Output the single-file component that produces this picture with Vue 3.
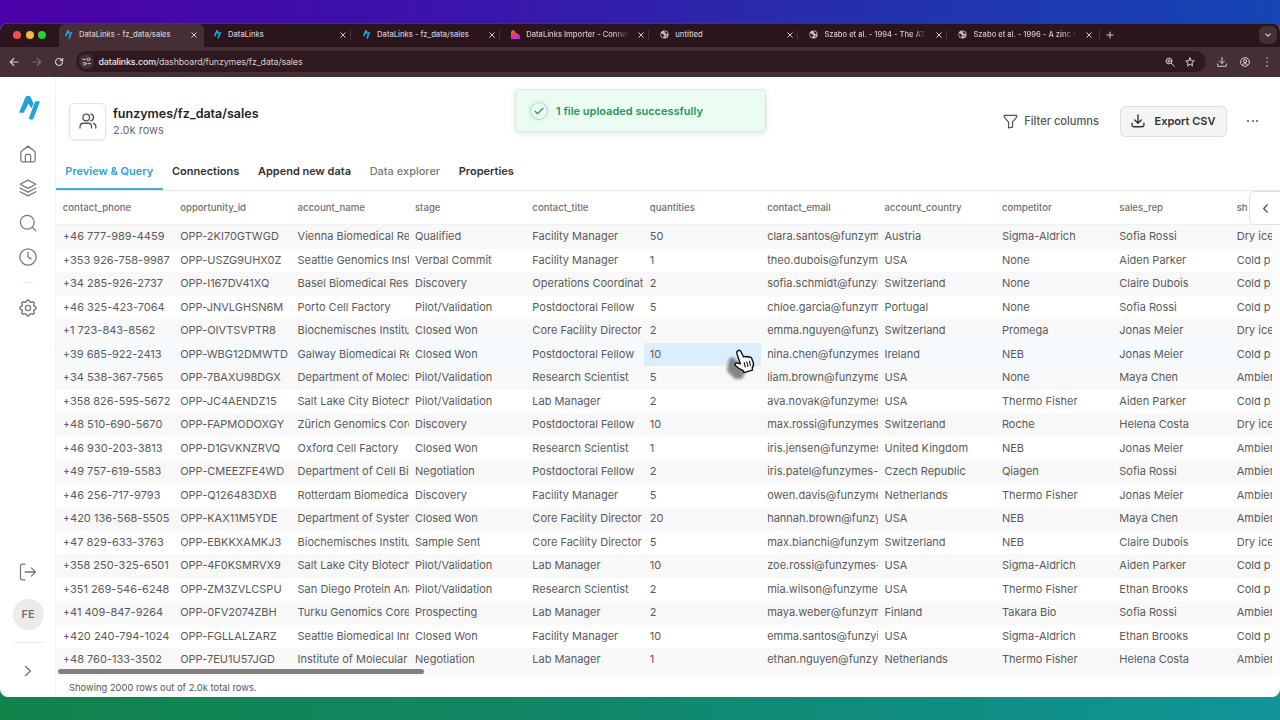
<template>
  <div class="desktop">
    <div class="browser">
      <!-- tab strip -->
      <div class="tab-strip">
        <div class="lights">
          <i class="light red"></i><i class="light yellow"></i><i class="light green"></i>
        </div>
        <div v-for="(tab, i) in tabs" :key="i" class="tab" :class="{ active: i === 0, divided: i > 1 }">
          <svg v-if="tab.icon === 'logo'" class="favicon" viewBox="0 0 22 26">
            <path class="logo-path" :d="logoPath" />
          </svg>
          <svg v-else-if="tab.icon === 'flame'" class="favicon" viewBox="0 0 10 10">
            <defs>
              <linearGradient id="flame" x1="0" y1="0" x2="0.3" y2="1">
                <stop offset="0" stop-color="#ff6a1f" />
                <stop offset="0.55" stop-color="#f8336a" />
                <stop offset="1" stop-color="#a63be8" />
              </linearGradient>
            </defs>
            <path d="M0 3Q0 .4 2.5.4 4.6.4 5 3L7.5 3.8Q10 4.8 10 8V10H0Z" fill="url(#flame)" />
          </svg>
          <svg v-else class="favicon" viewBox="0 0 10 10">
            <circle cx="5" cy="5" r="4.5" fill="#c9c1c3" />
            <path d="M1.2 4Q3 3.6 3.6 5 5.2 5 5 6.2L3.7 7.2V8.9Q.8 7.8 1.2 4ZM5.2 1.2Q4.6 2.8 6 3.2 6.3 4.4 8.6 4.8 8.6 2 5.2 1.2ZM6.1 6.4 8.1 6.2 6.6 8.3Z" fill="#33191f" />
          </svg>
          <span class="tab-title" :class="{ faded: tab.faded }">{{ tab.title }}</span>
          <svg class="tab-close" viewBox="0 0 8 8"><path d="M1.7 1.7 6.3 6.3M6.3 1.7 1.7 6.3" /></svg>
        </div>
        <div class="new-tab">
          <svg viewBox="0 0 8 8"><path d="M4 1V7M1 4H7" /></svg>
        </div>
        <div class="tab-search">
          <svg viewBox="0 0 8 8"><path d="M1.8 3 4 5.1 6.2 3" /></svg>
        </div>
      </div>

      <!-- address bar -->
      <div class="toolbar">
        <svg class="nav-icon" viewBox="0 0 10 10"><path d="M9 5H1.5M4.8 1.5 1.3 5 4.8 8.5" /></svg>
        <svg class="nav-icon dim" viewBox="0 0 10 10"><path d="M1 5H8.5M5.2 1.5 8.7 5 5.2 8.5" /></svg>
        <svg class="nav-icon" viewBox="0 0 10 10"><path d="M8.5 5A3.5 3.5 0 1 1 7.4 2.4L8.6 3.6M8.7 1.2V3.8H6.1" /></svg>
        <div class="address">
          <span class="site-info">
            <svg viewBox="0 0 10 10"><path d="M.8 2.6H4M6.6 7.4H9.5" /><circle cx="7.2" cy="2.6" r="1.5" /><circle cx="3" cy="7.4" r="1.5" /></svg>
          </span>
          <span class="url"><b>datalinks.com</b>/dashboard/funzymes/fz_data/sales</span>
          <svg class="bar-icon" viewBox="0 0 10 10"><circle cx="4" cy="4" r="2.9" /><path d="M6.2 6.2 9.3 9.3M2.6 4H5.4M4 2.6V5.4" /></svg>
          <svg class="bar-icon" viewBox="0 0 10 10"><path d="M5 .9 6.2 3.7 9.2 3.9 6.9 5.9 7.6 8.9 5 7.3 2.4 8.9 3.1 5.9.8 3.9 3.8 3.7Z" /></svg>
        </div>
        <svg class="bar-icon download" viewBox="0 0 10 10"><path d="M5 .5V6.2M2.5 4 5 6.5 7.5 4M.7 7V9.3H9.3V7" /></svg>
        <svg class="bar-icon profile" viewBox="0 0 10 10"><circle cx="5" cy="5" r="4.4" /><circle cx="5" cy="4.1" r="1.6" /><path d="M2.4 8.2Q2.8 6.6 5 6.6T7.6 8.2" /></svg>
        <svg class="bar-icon menu" viewBox="0 0 10 10"><path class="dots" d="M5 1.2V1.3M5 5V5.1M5 8.8V8.9" /></svg>
      </div>

      <div class="app">
        <!-- sidebar -->
        <aside class="sidebar">
          <svg class="brand" viewBox="0 0 22 26">
            <path class="logo-path" :d="logoPath" />
          </svg>
          <nav class="side-nav">
            <svg class="icon" viewBox="0 0 24 24"><path d="M2.5 9 12 1.500 21.500 9V20.500A2 2 0 0 1 19.500 22.500H4.500A2 2 0 0 1 2.500 20.500ZM8.500 22.500V14.500Q8.500 12.500 10.500 12.500H13.500Q15.500 12.500 15.500 14.500V22.500" /></svg>
            <svg class="icon" viewBox="0 0 24 24"><path d="M12 1.500 22.500 7 12 12.500 1.500 7ZM1.500 12 12 17.500 22.500 12M1.500 17 12 22.500 22.500 17" /></svg>
            <svg class="icon" viewBox="0 0 24 24"><circle cx="11" cy="11" r="9.200" /><path d="M17.800 17.800 22.500 22.500" /></svg>
            <svg class="icon" viewBox="0 0 24 24"><circle cx="12" cy="12" r="10.800" /><path d="M12 5.500V12L16 14.500" /></svg>
          </nav>
          <span class="short-line"></span>
          <svg class="icon" viewBox="0 0 24 24">
            <path d="M10.330 4.320c.430-1.760 2.920-1.760 3.350 0a1.720 1.720 0 0 0 2.570 1.070c1.540-.940 3.310.820 2.370 2.370a1.720 1.720 0 0 0 1.060 2.570c1.760.430 1.760 2.920 0 3.350a1.720 1.720 0 0 0-1.060 2.570c.940 1.540-.830 3.310-2.370 2.370a1.720 1.720 0 0 0-2.570 1.060c-.430 1.760-2.920 1.760-3.350 0a1.720 1.720 0 0 0-2.570-1.060c-1.540.940-3.310-.830-2.370-2.370a1.720 1.720 0 0 0-1.070-2.570c-1.760-.430-1.760-2.920 0-3.350a1.720 1.720 0 0 0 1.070-2.570c-.940-1.540.820-3.310 2.370-2.370 1 .600 2.300.070 2.570-1.070Z" transform="translate(-2.400 -2.400) scale(1.200)" />
            <circle cx="12" cy="12" r="3.500" />
          </svg>
          <div class="side-bottom">
            <svg class="icon" viewBox="0 0 24 24"><path d="M8 1.500H4.500A2.500 2.500 0 0 0 2 4V20A2.500 2.500 0 0 0 4.500 22.500H8M8 12H22M16.500 6.500 22 12 16.500 17.500" /></svg>
            <span class="avatar">FE</span>
            <span class="long-line"></span>
            <svg class="expand" viewBox="0 0 10 12"><path d="M2.500 1.500 7.500 6 2.500 10.500" /></svg>
          </div>
        </aside>

        <main class="main">
          <header class="header">
            <span class="dataset-icon">
              <svg viewBox="0 0 20 18"><circle cx="8" cy="5" r="3.700" /><path d="M1 17V15.500Q1 11.500 5 11.500H10.500Q14 11.500 14 15.500V17M13.300 1.300A3.800 3.800 0 0 1 13.300 8.700M16 11.700Q18.800 12.300 18.800 15.500V17" /></svg>
            </span>
            <div class="dataset">
              <h1>funzymes/fz_data/sales</h1>
              <p>2.0k rows</p>
            </div>
            <button class="filter">
              <svg viewBox="0 0 16 16"><path d="M1.300 1.500H14.700V2.600Q14.700 3.300 14.200 3.900L10.200 8.500V14L5.900 14.700V8.700L1.800 3.900Q1.300 3.300 1.300 2.600Z" /></svg>
              Filter columns
            </button>
            <button class="export">
              <svg viewBox="0 0 16 16"><path d="M8 1V10.300M4.300 6.900 8 10.500 11.700 6.900M1.200 10.500V12.500Q1.200 14.500 3.200 14.500H12.800Q14.800 14.500 14.800 12.500V10.500" /></svg>
              Export CSV
            </button>
            <span class="more"><i></i><i></i><i></i></span>
          </header>

          <div class="page-tabs">
            <span v-for="(name, i) in pageTabs" :key="name" class="page-tab" :class="{ current: i === 0, muted: i === 3 }">{{ name }}</span>
          </div>

          <div class="table-area">
            <div class="table-scroll">
              <div class="row head">
                <div v-for="col in columns" :key="col" class="cell">{{ col }}</div>
              </div>
              <div v-for="(row, r) in rows" :key="r" class="row body" :class="{ hovered: r === 5 }">
                <div v-for="(value, c) in row" :key="c" class="cell" :class="{ picked: r === 5 && c === 5 }">{{ value }}</div>
              </div>
            </div>
            <span class="scrollbar"></span>
            <span class="collapse">
              <svg viewBox="0 0 10 12"><path d="M7 1.800 3 6 7 10.200" /></svg>
            </span>
          </div>
          <footer class="footer">Showing 2000 rows out of 2.0k total rows.</footer>
        </main>
      </div>
    </div>

    <div class="toast">
      <span class="toast-icon"><svg viewBox="0 0 10 8"><path d="M1 4.300 3.500 6.700 9 1.300" /></svg></span>
      1 file uploaded successfully
    </div>

    <!-- pointer with its drop shadow -->
    <svg class="cursor" viewBox="0 0 36 36">
      <path class="cursor-shadow" d="M4 14 8 12 14 18 20 20 20 28 17 34 10 34 2 26Z" />
      <path class="cursor-hand" d="M13 5.600Q14.600 4.600 15.700 6.300L18.600 12Q19.600 10.700 21.200 12.100 22.500 10.900 23.900 12.400 25.700 11.300 26.700 13.400L28.200 17.500Q29.200 21 27.200 22.800L27.500 25.200 19 27.600 18 25.400Q14 24 10.400 20.400 9.600 18.200 11.500 17.900L15.400 18.900 12 9Q11.300 6.400 13 5.600Z" />
      <path class="cursor-lines" d="M19.200 17.500 20.300 22M21.900 17 22.900 21.500M24.500 16.200 25.500 20.700" />
    </svg>
  </div>
</template>

<script setup>
const logoPath = 'M0 18 6.500 2.200Q7.400.2 9.600.2 11.700.2 12.500 2L15.200 8.500 13.200 13.500 9.800 8.500 5 18ZM17 6H22L15.600 23Q14.700 25.300 12.600 25.300L10.200 24Z'

const tabs = [
  { icon: 'logo', title: 'DataLinks - fz_data/sales' },
  { icon: 'logo', title: 'DataLinks' },
  { icon: 'logo', title: 'DataLinks - fz_data/sales' },
  { icon: 'flame', title: 'DataLinks Importer - Connect', faded: true },
  { icon: 'globe', title: 'untitled' },
  { icon: 'globe', title: 'Szabo et al. - 1994 - The ATP', faded: true },
  { icon: 'globe', title: 'Szabo et al. - 1996 - A zinc fi', faded: true },
]

const pageTabs = ['Preview & Query', 'Connections', 'Append new data', 'Data explorer', 'Properties']

const columns = ['contact_phone', 'opportunity_id', 'account_name', 'stage', 'contact_title', 'quantities', 'contact_email', 'account_country', 'competitor', 'sales_rep', 'sh']

const rows = [
  ['+46 777-989-4459', 'OPP-2KI70GTWGD', 'Vienna Biomedical Re', 'Qualified', 'Facility Manager', 50, 'clara.santos@funzym', 'Austria', 'Sigma-Aldrich', 'Sofia Rossi', 'Dry ice'],
  ['+353 926-758-9987', 'OPP-USZG9UHX0Z', 'Seattle Genomics Inst', 'Verbal Commit', 'Facility Manager', 1, 'theo.dubois@funzym', 'USA', 'None', 'Aiden Parker', 'Cold p'],
  ['+34 285-926-2737', 'OPP-I167DV41XQ', 'Basel Biomedical Rese', 'Discovery', 'Operations Coordinat', 2, 'sofia.schmidt@funzyi', 'Switzerland', 'None', 'Claire Dubois', 'Cold p'],
  ['+46 325-423-7064', 'OPP-JNVLGHSN6M', 'Porto Cell Factory', 'Pilot/Validation', 'Postdoctoral Fellow', 5, 'chloe.garcia@funzym', 'Portugal', 'None', 'Sofia Rossi', 'Cold p'],
  ['+1 723-843-8562', 'OPP-OIVTSVPTR8', 'Biochemisches Institu', 'Closed Won', 'Core Facility Director', 2, 'emma.nguyen@funzy', 'Switzerland', 'Promega', 'Jonas Meier', 'Dry ice'],
  ['+39 685-922-2413', 'OPP-WBG12DMWTD', 'Galway Biomedical Re', 'Closed Won', 'Postdoctoral Fellow', 10, 'nina.chen@funzymes', 'Ireland', 'NEB', 'Jonas Meier', 'Cold p'],
  ['+34 538-367-7565', 'OPP-7BAXU98DGX', 'Department of Molecu', 'Pilot/Validation', 'Research Scientist', 5, 'liam.brown@funzyme', 'USA', 'None', 'Maya Chen', 'Ambien'],
  ['+358 826-595-5672', 'OPP-JC4AENDZ15', 'Salt Lake City Biotech', 'Pilot/Validation', 'Lab Manager', 2, 'ava.novak@funzymes', 'USA', 'Thermo Fisher', 'Aiden Parker', 'Cold p'],
  ['+48 510-690-5670', 'OPP-FAPMODOXGY', 'Zürich Genomics Core', 'Discovery', 'Postdoctoral Fellow', 10, 'max.rossi@funzymes', 'Switzerland', 'Roche', 'Helena Costa', 'Dry ice'],
  ['+46 930-203-3813', 'OPP-D1GVKNZRVQ', 'Oxford Cell Factory', 'Closed Won', 'Research Scientist', 1, 'iris.jensen@funzymes', 'United Kingdom', 'NEB', 'Jonas Meier', 'Ambien'],
  ['+49 757-619-5583', 'OPP-CMEEZFE4WD', 'Department of Cell Bi', 'Negotiation', 'Postdoctoral Fellow', 2, 'iris.patel@funzymes-', 'Czech Republic', 'Qiagen', 'Sofia Rossi', 'Ambien'],
  ['+46 256-717-9793', 'OPP-Q126483DXB', 'Rotterdam Biomedica', 'Discovery', 'Facility Manager', 5, 'owen.davis@funzyme', 'Netherlands', 'Thermo Fisher', 'Jonas Meier', 'Ambien'],
  ['+420 136-568-5505', 'OPP-KAX11M5YDE', 'Department of System', 'Closed Won', 'Core Facility Director', 20, 'hannah.brown@funzy', 'USA', 'NEB', 'Maya Chen', 'Ambien'],
  ['+47 829-633-3763', 'OPP-EBKKXAMKJ3', 'Biochemisches Institu', 'Sample Sent', 'Core Facility Director', 5, 'max.bianchi@funzym', 'Switzerland', 'NEB', 'Claire Dubois', 'Dry ice'],
  ['+358 250-325-6501', 'OPP-4F0KSMRVX9', 'Salt Lake City Biotech', 'Pilot/Validation', 'Lab Manager', 10, 'zoe.rossi@funzymes-', 'USA', 'Sigma-Aldrich', 'Aiden Parker', 'Cold p'],
  ['+351 269-546-6248', 'OPP-ZM3ZVLCSPU', 'San Diego Protein Ana', 'Pilot/Validation', 'Research Scientist', 2, 'mia.wilson@funzyme', 'USA', 'Thermo Fisher', 'Ethan Brooks', 'Cold p'],
  ['+41 409-847-9264', 'OPP-0FV2074ZBH', 'Turku Genomics Core', 'Prospecting', 'Lab Manager', 2, 'maya.weber@funzym', 'Finland', 'Takara Bio', 'Sofia Rossi', 'Ambien'],
  ['+420 240-794-1024', 'OPP-FGLLALZARZ', 'Seattle Biomedical Inn', 'Closed Won', 'Facility Manager', 10, 'emma.santos@funzyi', 'USA', 'Sigma-Aldrich', 'Ethan Brooks', 'Cold p'],
  ['+48 760-133-3502', 'OPP-7EU1U57JGD', 'Institute of Molecular', 'Negotiation', 'Lab Manager', 1, 'ethan.nguyen@funzy', 'Netherlands', 'Thermo Fisher', 'Helena Costa', 'Ambien'],
]
</script>

<style>
body {
  background: #3c18a8;
  overflow: hidden;
}
</style>

<style scoped>
.desktop {
  position: relative;
  width: 1280px;
  height: 720px;
  box-sizing: border-box;
  padding: 23px 0;
  background:
    linear-gradient(90deg, #4b00a8 0%, #3916ab 38%, #2430ae 68%, #1546b4 100%) top / 100% 360px no-repeat,
    linear-gradient(90deg, #12834b 0%, #108768 45%, #0f9499 100%) bottom / 100% 360px no-repeat;
  font-family: Inter, sans-serif;
  overflow: hidden;
}

svg {
  display: block;
  flex: none;
  fill: none;
  stroke: currentColor;
  stroke-linecap: round;
  stroke-linejoin: round;
}

.browser {
  height: 674px;
  display: flex;
  flex-direction: column;
  border-radius: 8px;
  overflow: hidden;
  background: #fff;
}

.tab-strip {
  height: 24px;
  flex: none;
  display: flex;
  align-items: center;
  background: #2a151c;
  color: #d4c8cc;
  box-sizing: border-box;
  border-top: 1px solid #4e3450;
}

.lights {
  width: 59px;
  box-sizing: border-box;
  padding-left: 13px;
  padding-bottom: 1px;
  display: flex;
  gap: 4.5px;
}

.light {
  width: 8px;
  height: 8px;
  border-radius: 50%;
}

.red { background: #f14e56; }
.yellow { background: #f4b73d; }
.green { background: #32c943; }

.tab {
  position: relative;
  width: 149.1px;
  height: 23px;
  flex: none;
  box-sizing: border-box;
  display: flex;
  align-items: center;
  padding: 0 10px 2px 5px;
  font-size: 7.6px;
  font-weight: 500;
}

.tab.active {
  width: 145px;
  margin-right: 4px;
  padding-right: 6px;
  background: #452e34;
  border-radius: 6px 6px 0 0;
}

/* separator between inactive tabs */
.tab.divided::before,
.new-tab::before {
  content: '';
  position: absolute;
  left: -7px;
  top: 6px;
  width: 1px;
  height: 10px;
  background: #483038;
}

.favicon {
  width: 9px;
  height: 9px;
  stroke: none;
}

.logo-path {
  fill: #20a3dc;
  stroke: none;
}

.tab-title {
  flex: 1;
  min-width: 0;
  margin-left: 6px;
  margin-right: 6px;
  overflow: hidden;
  white-space: nowrap;
}

.tab-title.faded {
  mask-image: linear-gradient(90deg, #000 84%, transparent 98%);
}

.tab-close {
  width: 8px;
  height: 8px;
  stroke-width: 1;
}

.new-tab {
  position: relative;
  height: 23px;
  box-sizing: border-box;
  padding-bottom: 2px;
  display: flex;
  align-items: center;
  margin-left: 3.5px;
}

.new-tab svg {
  width: 8px;
  height: 8px;
  stroke-width: 1;
}

.tab-search {
  width: 18px;
  height: 18px;
  margin: 0 3px 1px auto;
  border-radius: 6px;
  background: #452e34;
  display: flex;
  align-items: center;
  justify-content: center;
}

.tab-search svg {
  width: 8px;
  height: 8px;
  stroke-width: 1.2;
}

.toolbar {
  height: 30px;
  flex: none;
  box-sizing: border-box;
  display: flex;
  align-items: center;
  padding: 0 0 1px 9px;
  background: #452e34;
  color: #d8cbcf;
}

.nav-icon {
  width: 10px;
  height: 10px;
  margin-right: 12.5px;
  stroke-width: 1.1;
}

.nav-icon.dim {
  color: #7d686f;
}

.address {
  width: 1130px;
  height: 21px;
  box-sizing: border-box;
  margin-left: -1px;
  padding: 0 10.5px 0 3px;
  display: flex;
  align-items: center;
  border-radius: 11px;
  background: #2f1a20;
}

.site-info {
  width: 15px;
  height: 15px;
  border-radius: 50%;
  background: #452e34;
  display: flex;
  align-items: center;
  justify-content: center;
}

.site-info svg {
  width: 9px;
  height: 9px;
  stroke-width: 1.1;
}

.url {
  flex: 1;
  margin-left: 5px;
  font-size: 8.8px;
  letter-spacing: -0.1px;
}

.url b {
  font-weight: 500;
  color: #f2e9eb;
}

.bar-icon {
  width: 10px;
  height: 10px;
  stroke-width: 1;
}

.address .bar-icon + .bar-icon {
  margin-left: 10px;
}

.download { margin-left: 11px; }
.profile { margin-left: 13px; }
.menu { margin-left: 12px; }
.dots { stroke-width: 1.5; }

.app {
  flex: 1;
  min-height: 0;
  display: flex;
}

.sidebar {
  width: 56px;
  box-sizing: border-box;
  flex: none;
  display: flex;
  flex-direction: column;
  align-items: center;
  border-right: 1px solid #f0f0f0;
  padding-left: 1px;
  padding-top: 18px;
  color: #777;
}

.brand {
  width: 21px;
  height: 26px;
  margin-left: 3px;
}

.side-nav {
  display: flex;
  flex-direction: column;
  gap: 16.6px;
  margin-top: 23.5px;
}

.icon {
  width: 18px;
  height: 18px;
  stroke-width: 1.7;
}

.short-line {
  width: 10px;
  height: 1px;
  margin: 16px 0 15.5px;
  background: #ececec;
}

.side-bottom {
  margin-top: auto;
  display: flex;
  flex-direction: column;
  align-items: center;
}

.avatar {
  width: 31px;
  height: 31px;
  margin-top: 18px;
  border-radius: 50%;
  background: #ebebeb;
  color: #717171;
  font-size: 11px;
  font-weight: 600;
  line-height: 31px;
  text-align: center;
}

.long-line {
  width: 31px;
  height: 1px;
  margin: 12px 0 22px;
  background: #ececec;
}

.expand {
  width: 10px;
  height: 12px;
  margin-bottom: 20px;
  stroke-width: 1.5;
}

.main {
  flex: 1;
  min-width: 0;
  display: flex;
  flex-direction: column;
}

.header {
  height: 75px;
  flex: none;
  box-sizing: border-box;
  padding: 13px 22px 0 13px;
  display: flex;
  align-items: center;
}

.dataset-icon {
  width: 37px;
  height: 37px;
  box-sizing: border-box;
  border: 1px solid #e3e3e3;
  border-radius: 5px;
  box-shadow: 0 1px 2px rgba(0, 0, 0, 0.08);
  display: flex;
  align-items: center;
  justify-content: center;
  color: #555;
}

.dataset-icon svg {
  width: 18px;
  height: 16px;
  stroke-width: 1.5;
}

.dataset {
  flex: 1;
  margin-left: 7px;
  padding-top: 2px;
}

.dataset h1 {
  margin: 0;
  font-size: 12.5px;
  line-height: 17px;
  font-weight: 600;
  color: #222;
}

.dataset p {
  margin: 0;
  font-size: 11px;
  line-height: 17px;
  color: #6c6c6c;
}

button {
  font-family: inherit;
  font-size: 11.1px;
  font-weight: 500;
  display: flex;
  align-items: center;
  background: none;
  border: 0;
  padding: 0;
  color: #555;
}

.filter svg {
  width: 15px;
  height: 15px;
  margin-right: 6px;
  stroke-width: 1.3;
}

.export {
  width: 107px;
  height: 31px;
  box-sizing: border-box;
  margin-left: 21px;
  padding-left: 9.5px;
  border: 1px solid #dedede;
  border-radius: 5px;
  background: #f5f5f5;
  color: #333;
  font-weight: 600;
  font-size: 11px;
}

.export svg {
  width: 14px;
  height: 14px;
  margin-right: 10px;
  stroke-width: 1.6;
}

.more {
  display: flex;
  gap: 2.5px;
  margin-left: 20px;
}

.more i {
  width: 2px;
  height: 2px;
  border-radius: 50%;
  background: #555;
}

.page-tabs {
  height: 39px;
  flex: none;
  box-sizing: border-box;
  border-bottom: 1px solid #e8e8e8;
  display: flex;
  font-size: 11px;
  font-weight: 600;
  color: #333;
}

.page-tab {
  height: 38px;
  box-sizing: border-box;
  padding: 0 9.3px;
  line-height: 38px;
  white-space: nowrap;
}

.page-tab.current {
  color: #2ba3d4;
  border-bottom: 2px solid #45addb;
}

.page-tab.muted {
  color: #777;
  font-weight: 500;
}

.table-area {
  position: relative;
  height: 485px;
  flex: none;
  background: #fbfbfb;
}

.table-scroll {
  width: 1216px;
  height: 485px;
  overflow: hidden;
  background: #f8f8f8;
}

.row {
  display: flex;
  width: 1293px;
  box-sizing: border-box;
  padding-left: 0.7px;
  background: #fff;
}

.head {
  height: 34px;
  border-bottom: 1px solid #f0f0f0;
  color: #707070;
  font-size: 9.6px;
  font-weight: 500;
}

.head .cell {
  line-height: 34px;
}

.body {
  height: 23.5px;
  color: #5a5a5a;
  font-size: 11px;
}

.body:nth-child(even) {
  background: #f8f8f8;
}

.body.hovered {
  background: #f4fafe;
}

.cell {
  width: 117.4px;
  flex: none;
  box-sizing: border-box;
  padding-left: 6.1px;
  line-height: 23.5px;
  white-space: nowrap;
  overflow: hidden;
}

.picked {
  background: #daeffb;
}

.scrollbar {
  position: absolute;
  left: 2px;
  bottom: 2px;
  width: 366px;
  height: 5px;
  border-radius: 3px;
  background: #808080;
}

.collapse {
  position: absolute;
  right: -1px;
  top: 0;
  width: 32px;
  height: 34px;
  box-sizing: border-box;
  border: 1px solid #e0e0e0;
  border-radius: 5px 0 0 5px;
  background: #fff;
  color: #555;
  display: flex;
  align-items: center;
  justify-content: center;
}

.collapse svg {
  width: 9px;
  height: 11px;
  stroke-width: 1.4;
}

.footer {
  flex: 1;
  padding-left: 13px;
  font-size: 9.4px;
  line-height: 24px;
  color: #555;
}

.toast {
  position: absolute;
  left: 515px;
  top: 89px;
  width: 251px;
  height: 43px;
  box-sizing: border-box;
  padding-left: 12px;
  display: flex;
  align-items: center;
  border: 1px solid #c2f3d5;
  border-radius: 4px;
  background: #ebfdf3;
  box-shadow: 0 2px 6px rgba(0, 0, 0, 0.1);
  color: #26975a;
  font-size: 11px;
  font-weight: 600;
}

.toast-icon {
  width: 18px;
  height: 18px;
  box-sizing: border-box;
  margin: 0 8px 0 2px;
  border: 1px solid #a6d8ba;
  border-radius: 50%;
  box-shadow: 0 0 0 1.5px #ebfdf3, 0 0 0 2.5px #d9f5e5;
  display: flex;
  align-items: center;
  justify-content: center;
}

.toast-icon svg {
  width: 10px;
  height: 8px;
  stroke-width: 1.2;
}

.cursor {
  position: absolute;
  left: 725px;
  top: 345px;
  width: 36px;
  height: 36px;
}

.cursor-shadow {
  fill: rgba(40, 40, 40, 0.55);
  stroke: none;
  filter: blur(1.8px);
}

.cursor-hand {
  fill: #fff;
  stroke: #111;
  stroke-width: 1.4;
}

.cursor-lines {
  stroke: #111;
  stroke-width: 1.1;
}
</style>
